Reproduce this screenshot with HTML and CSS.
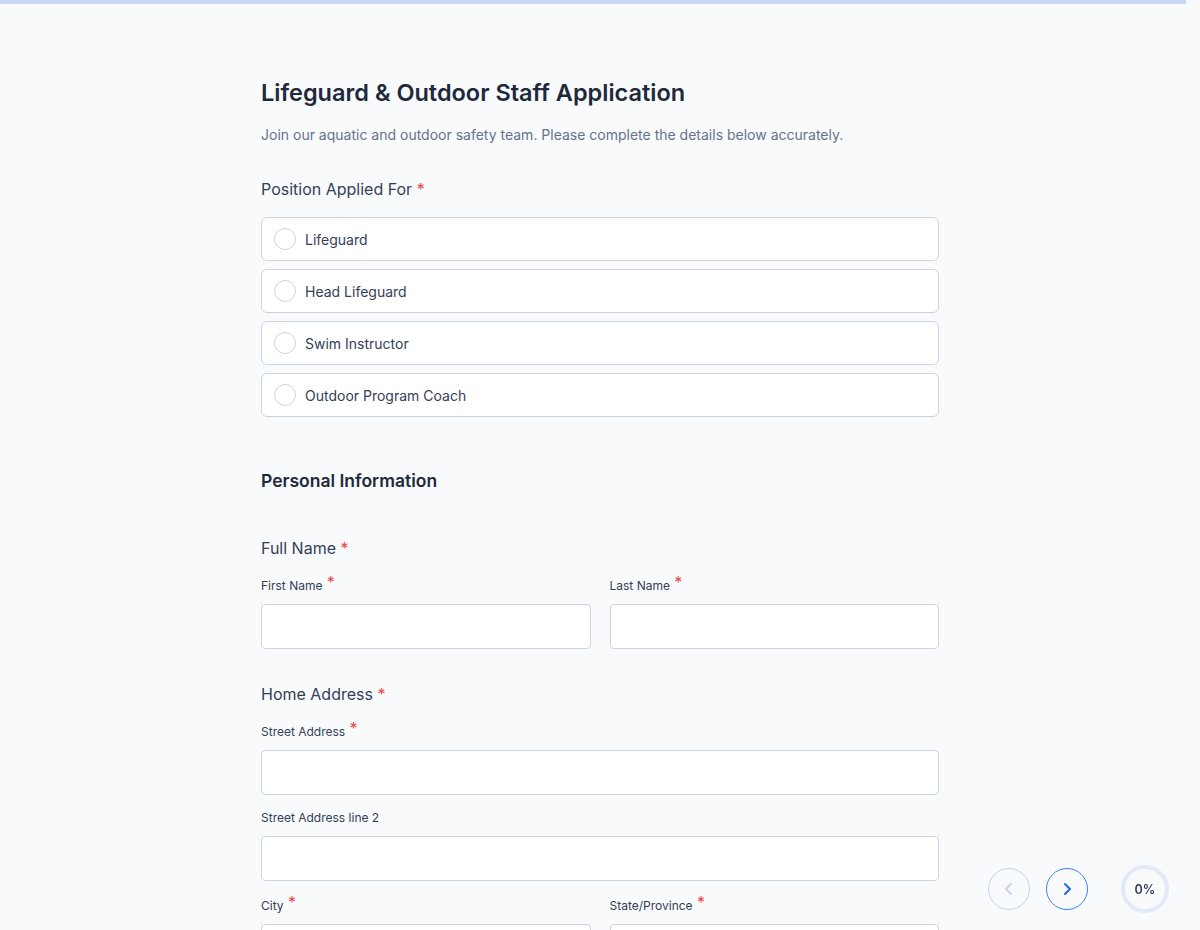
FILE: index.html
```html
<!DOCTYPE html>
<html lang="en">
<head>
  <meta charset="UTF-8" />
  <meta name="viewport" content="width=device-width, initial-scale=1.0"/>
  <title>Lifeguard &amp; Outdoor Staff Application</title>
  <link rel="stylesheet" href="styles.css">
</head>
<body>
  <div class="top-progress"></div>

  <main class="form-wrap">
    <h1>Lifeguard &amp; Outdoor Staff Application</h1>
    <p class="intro">Join our aquatic and outdoor safety team. Please complete the details below accurately.</p>

    <div class="question">
      <div class="q-label">Position Applied For <span class="req">*</span></div>
      <div class="options">
        <label class="option"><span class="radio"></span>Lifeguard</label>
        <label class="option"><span class="radio"></span>Head Lifeguard</label>
        <label class="option"><span class="radio"></span>Swim Instructor</label>
        <label class="option"><span class="radio"></span>Outdoor Program Coach</label>
      </div>
    </div>

    <h2>Personal Information</h2>

    <div class="question">
      <div class="q-label">Full Name <span class="req">*</span></div>
      <div class="row">
        <div class="field">
          <div class="f-label">First Name <span class="req">*</span></div>
          <input type="text" />
        </div>
        <div class="field">
          <div class="f-label">Last Name <span class="req">*</span></div>
          <input type="text" />
        </div>
      </div>
    </div>

    <div class="question address">
      <div class="q-label">Home Address <span class="req">*</span></div>
      <div class="field">
        <div class="f-label">Street Address <span class="req">*</span></div>
        <input type="text" />
      </div>
      <div class="field">
        <div class="f-label">Street Address line 2</div>
        <input type="text" />
      </div>
      <div class="row">
        <div class="field">
          <div class="f-label">City <span class="req">*</span></div>
          <input type="text" />
        </div>
        <div class="field">
          <div class="f-label">State/Province <span class="req">*</span></div>
          <input type="text" />
        </div>
      </div>
    </div>
  </main>

  <div class="nav">
    <button class="nav-btn prev" aria-label="Previous">
      <svg width="16" height="16" viewBox="0 0 16 16" fill="none" stroke="currentColor" stroke-width="1.8" stroke-linecap="round" stroke-linejoin="round"><path d="M10 3 L5 8 L10 13"/></svg>
    </button>
    <button class="nav-btn next" aria-label="Next">
      <svg width="16" height="16" viewBox="0 0 16 16" fill="none" stroke="currentColor" stroke-width="2" stroke-linecap="round" stroke-linejoin="round"><path d="M6 3 L11 8 L6 13"/></svg>
    </button>
    <div class="progress-ring">0%</div>
  </div>
</body>
</html>
```

FILE: styles.css
```css
* {
  box-sizing: border-box;
}
body {
  margin: 0;
  background-color: #f8fafc;
  color: #1e293b;
  font-family: Inter, "Noto Sans", Arial, sans-serif;
  height: 930px;
  overflow: hidden;
}
.top-progress {
  height: 4px;
  margin-right: 14px;
  background: #c9daf8;
}
.form-wrap {
  width: 678px;
  margin: 0 auto;
  padding-top: 72px;
}
h1 {
  margin: 0;
  font-size: 23.5px;
  line-height: 34px;
  font-weight: 600;
  color: #1e293b;
}
.intro {
  margin: 15px 0 0;
  font-size: 14px;
  line-height: 20px;
  color: #64748b;
}
.question {
  margin-top: 32px;
}
.q-label {
  font-size: 16px;
  line-height: 24px;
  color: #334155;
}
.req {
  color: #ef4444;
}
.options {
  display: flex;
  flex-direction: column;
  gap: 8px;
  margin-top: 16px;
}
.option {
  display: flex;
  align-items: center;
  height: 44px;
  padding: 0 12px;
  background: #fff;
  border: 1px solid #cbd5e1;
  border-radius: 6px;
  font-size: 14px;
  color: #334155;
}
.radio {
  width: 22px;
  height: 22px;
  border: 1px solid #cbd5e1;
  border-radius: 50%;
  margin-right: 9px;
  background: #fff;
}
h2 {
  margin: 51px 0 0;
  font-size: 17.5px;
  line-height: 26px;
  font-weight: 600;
  color: #1e293b;
}
h2 + .question {
  margin-top: 42px;
}
.address {
  margin-top: 33px;
}
.row {
  display: grid;
  grid-template-columns: 1fr 1fr;
  gap: 19px;
}
.field {
  margin-top: 15px;
}
.field + .row .field {
  margin-top: 17px;
}
.q-label + .row .field,
.q-label + .field {
  margin-top: 18px;
}
.f-label {
  font-size: 12px;
  line-height: 16px;
  color: #334155;
  margin-bottom: 10px;
}
.f-label .req {
  font-size: 16px;
  line-height: 0;
  position: relative;
  top: -2px;
  margin-left: 1px;
}
input {
  display: block;
  width: 100%;
  height: 45px;
  background: #fff;
  border: 1px solid #cbd5e1;
  border-radius: 4px;
  font-size: 14px;
  padding: 0 12px;
}
.nav {
  position: fixed;
  right: 31px;
  bottom: 17px;
  display: flex;
  align-items: center;
}
.nav-btn {
  width: 42px;
  height: 42px;
  border-radius: 50%;
  background: #f8fafc;
  display: flex;
  align-items: center;
  justify-content: center;
  padding: 0;
  margin-right: 16px;
  cursor: pointer;
}
.prev {
  border: 1px solid #bfd3f8;
  color: #bfd3f8;
}
.next {
  border: 1px solid #3b82f6;
  color: #2563eb;
  margin-right: 33px;
}
.progress-ring {
  width: 48px;
  height: 48px;
  border-radius: 50%;
  border: 4px solid #e2eafa;
  display: flex;
  align-items: center;
  justify-content: center;
  font-size: 12.5px;
  font-weight: 600;
  color: #334155;
}
```
